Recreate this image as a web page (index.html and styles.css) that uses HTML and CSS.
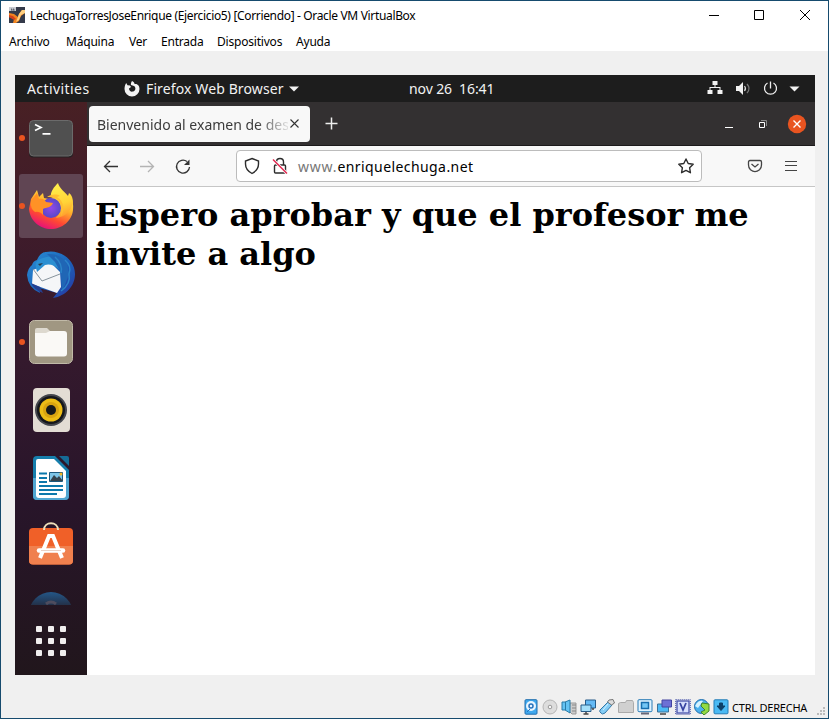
FILE: index.html
```html
<!DOCTYPE html>
<html lang="es">
<head>
<meta charset="utf-8">
<title>LechugaTorresJoseEnrique (Ejercicio5) [Corriendo] - Oracle VM VirtualBox</title>
<link rel="stylesheet" href="styles.css">
</head>
<body>
<div class="window">
  <header class="titlebar">
    <svg class="app-icon" width="16" height="16" viewBox="0 0 16 16"><rect width="16" height="16" fill="#343a4a"/><path d="M0 6l5 1 4 3 1-3 3-4h3v3l-4 3-2 5-3 2H4l1-4-5-2z" fill="#f28420"/><path d="M10 7l3-4h3v3l-4 2-2 5-3 2z" fill="#ffd080"/><path d="M0 8l4 1 3 3-2 1-5-3z" fill="#d4401c"/><path d="M0 0h7v4H0z" fill="#c8cbd2"/><path d="M2 2h1v2M4 2h1v2" stroke="#707682"/></svg>
    <span class="title">LechugaTorresJoseEnrique (Ejercicio5) [Corriendo] - Oracle VM VirtualBox</span>
    <svg class="win-controls" width="104" height="12" viewBox="0 0 104 12" fill="none" stroke="#000"><path d="M1 6.500h10M46.500 1.500h9v9h-9zM92 1l10 10M102 1L92 11"/></svg>
  </header>
  <nav class="menubar"><span class="m1">Archivo</span><span class="m2">Máquina</span><span class="m3">Ver</span><span class="m4">Entrada</span><span class="m5">Dispositivos</span><span class="m6">Ayuda</span></nav>
  <main class="stage">
    <div class="desktop">
      <div class="topbar">
        <span class="activities">Activities</span>
        <svg class="fox-mono" width="16" height="16" viewBox="0 0 16 16"><path d="M8 0C10 1 10.500 2 10.500 3C14 2.500 15.500 5 15.500 8A7.500 7.500 0 0 1 .500 8C.500 5 1.500 3 2.200 2L3.500 4.200 6 4.500 7 6 5 7.500C5 10 7 11 9 10.500 12 10 12 6 10 5L7 4C6.500 2.500 7.500 1 8 0z" fill="#f2f2f2"/></svg>
        <span class="appname">Firefox Web Browser</span>
        <svg class="caret" width="10" height="6" viewBox="0 0 10 6"><path d="M0 .5h10L5 5.500z" fill="#f2f2f2"/></svg>
        <span class="clock">nov 26&nbsp; 16:41</span>
        <svg class="tray" width="94" height="16" viewBox="0 0 94 16" fill="#f2f2f2"><path d="M5.500 0h5v4h-2v2h5v3h2v4h-5V9h2V7h-9v2h2v4H.500V9h2V6h5V4h-2z"/><path d="M29 5h3l4-4v13l-4-4h-3z"/><path d="M37.500 5q2 2.500 0 5" fill="none" stroke="#ddd" stroke-width="1.200"/><path d="M40 3q4 4.500 0 9" fill="none" stroke="#777" stroke-width="1.300"/><path d="M60.500 2a6 6 0 1 0 6 0M63.500 .5v7" fill="none" stroke="#eee" stroke-width="1.300"/><path d="M82.500 5.500h10l-5 5z"/></svg>
      </div>
      <div class="workspace">
        <aside class="dock">
          <div class="dock-list">
            <div class="item running"><svg width="48" height="48" viewBox="0 0 48 48"><rect x="2" y="7.500" width="44" height="36" rx="4" fill="#242123"/><rect x="2.500" y="6.500" width="43" height="35.500" rx="4" fill="#505050" stroke="#6b6b6b"/><path d="M8 10.500l6 3-6 3M15.500 19.800h8" fill="none" stroke="#fff" stroke-width="1.700"/></svg></div>
            <div class="item running active"><svg width="48" height="48" viewBox="0 0 48 48"><defs><linearGradient id="ff" x1=".8" y1=".1" x2=".35" y2="1"><stop offset="0" stop-color="#fff44f"/><stop offset=".35" stop-color="#ffb52c"/><stop offset=".7" stop-color="#ff4932"/><stop offset="1" stop-color="#e5107b"/></linearGradient><linearGradient id="flame" x1=".3" y1="0" x2=".5" y2="1"><stop offset="0" stop-color="#fff04c"/><stop offset=".6" stop-color="#ffd338"/><stop offset="1" stop-color="#ff9a2d"/></linearGradient><radialGradient id="globe"><stop offset="0" stop-color="#9349e8"/><stop offset="1" stop-color="#5848c8"/></radialGradient></defs><path d="M4 17l6-9 2 7 4-4 1 5 5 1 10-4 9 1 3 2c2 3 2.500 7 2 12C45 39 35 47 24 47S3 39 2 27z" fill="url(#ff)"/><path d="M31 1c-4 4-8 9-7 14l6 2c4 5 5 12-1 19 10-1 15-8 17-15 0-4-1-8-4-10l-1 3C38 10 32 6 31 1z" fill="url(#flame)"/><circle cx="24" cy="26" r="10" fill="url(#globe)"/><path d="M4 19l6-8 2 6c4-1 6 1 7 3l7 1c-2 5-6 4-10 6v6q-3-4-8-3-5-3-4-11z" fill="#ff9226"/><path d="M20 15c5-3 10-3 13-1l-3 1c7 4 8 13 4 19q2-8-2-15c-3-3-6-4-12-4z" fill="#ffbe32"/></svg></div>
            <div class="item"><svg width="48" height="48" viewBox="0 0 48 48"><defs><linearGradient id="tb" x1="0" y1="0" x2="1" y2="1"><stop offset="0" stop-color="#2a8fd6"/><stop offset=".5" stop-color="#1c67bd"/><stop offset="1" stop-color="#2734a0"/></linearGradient></defs><path d="M10 10C13 3 17 2 19 2 32-1 48 9 48 24 48 36 39 46 26 48l4-5-18-5 1 5Q1 38 0 25q1-7 5-10 1-4 5-5z" fill="url(#tb)"/><path d="M6 20l5-2q7-5 13-5l9 9 1 15-4 6-25-9z" fill="#f5f6f8"/><path d="M6 19l9 12 18-7" fill="none" stroke="#87939c"/><path d="M9 18q-2-6 4-9 7-3 16-3l4 14q-8-7-15-5l-8 7z" fill="#2b8fd2"/><path d="M20 4q14-1 20 10l2 10-4 11-3 6q-1-10-1-18l-6-11z" fill="#2066b5"/><path d="M38 10q7 6 4 14 2 10-8 17M28 7q8 7 6 16" fill="none" stroke="#2b84c8" stroke-width="1.500"/><path d="M11 14l5-1-3 3z" fill="#263b50"/><path d="M4 33l9 4 3 6Q7 40 4 33z" fill="#243f91"/></svg></div>
            <div class="item running"><svg width="48" height="48" viewBox="0 0 48 48"><rect x="2.500" y="2.500" width="43" height="43" rx="5" fill="#a09782" stroke="#c1baa8"/><path d="M8 12q0-2 2-2h10l4 4v8H8z" fill="#ddd9cf"/><path d="M8 15h11l4-2h14q3 0 3 3V35.500q0 3-3 3H11q-3 0-3-3z" fill="#faf9f6"/></svg></div>
            <div class="item"><svg width="48" height="48" viewBox="0 0 48 48"><rect x="6" y="2" width="37" height="44" rx="4" fill="#e3ddd4"/><circle cx="24" cy="24" r="16" fill="#44464c"/><circle cx="24" cy="24" r="14" fill="#15171b"/><circle cx="24" cy="24" r="11.500" fill="#edbd16"/><circle cx="24" cy="24" r="8" fill="#d9a411"/><circle cx="24" cy="24" r="5" fill="#15191b"/></svg></div>
            <div class="item"><svg width="48" height="48" viewBox="0 0 48 48"><path d="M10 2h18l14 14V42q0 4-4 4H10q-4 0-4-4V6q0-4 4-4z" fill="#167eac"/><path d="M6 24h36v18q0 4-4 4H10q-4 0-4-4z" fill="#50a6d1"/><path d="M11 5h16l12 12v24q0 3-3 3H12q-3 0-3-3V7q0-2 2-2z" fill="#fff"/><path d="M32 2h8q2 0 2 2v8z" fill="#156b96"/><path d="M12 19.500h8M12 24h8M12 28h8M12 32h24M12 36h24M12 40h18" stroke="#0c78ab" stroke-width="1.800"/><path d="M22.500 18.500h13v9h-13z" fill="#7dc5e7" stroke="#1c587c"/><path d="M23 27l4-6 3 3 2-2 4 5z" fill="#34434c"/><circle cx="34" cy="20" r="1.500" fill="#f3b622"/></svg></div>
            <div class="item"><svg width="48" height="48" viewBox="0 0 48 48"><rect x="2" y="6" width="44" height="36.500" rx="4" fill="#f06028"/><path d="M2 24h44v14.500q0 4-4 4H6q-4 0-4-4z" fill="#f0804e"/><path d="M17 8c0-9 14-9 14 0" fill="none" stroke="#eee0bb" stroke-width="2"/><path d="M13 36l9-22h4l9 22" fill="none" stroke="#fff" stroke-width="4"/><path d="M12 28.500h24" stroke="#fff" stroke-width="4.500" stroke-linecap="round"/><path d="M14 28.500h20" stroke="#ead1c5"/></svg></div>
            <div class="item help"><svg width="48" height="48" viewBox="0 0 48 48"><defs><linearGradient id="hp" x1="0" y1="0" x2="0" y2="1"><stop offset="0" stop-color="#245788"/><stop offset=".3" stop-color="#233048"/></linearGradient></defs><circle cx="24" cy="24" r="22" fill="url(#hp)"/><path d="M19 14q5-4 10 0" fill="none" stroke="#4e4c5e" stroke-width="3"/></svg></div>
          </div>
          <div class="app-grid"><i></i><i></i><i></i><i></i><i></i><i></i><i></i><i></i><i></i></div>
        </aside>
        <section class="browser">
          <div class="tabs">
            <div class="tab"><span class="tab-label">Bienvenido al examen de des</span><svg width="9" height="9" viewBox="0 0 9 9"><path d="M.5.5l8 8M8.500.5l-8 8" stroke="#333" stroke-width="1.100"/></svg></div>
            <svg class="plus" width="13" height="13" viewBox="0 0 13 13"><path d="M.5 6.500h12M6.500.5v12" stroke="#eee" stroke-width="1.500"/></svg>
            <svg class="browser-controls" width="84" height="20" viewBox="0 0 84 20" fill="none" stroke="#fff"><path d="M1 13.500h8"/><path d="M35.500 8.500h5v5h-5z"/><path d="M37 6.500h5.500V12" stroke="#888"/><circle cx="73" cy="10" r="9.200" fill="#e95420" stroke="none"/><path d="M69.500 6.500l7 7M76.500 6.500l-7 7" stroke-width="1.400"/></svg>
          </div>
          <div class="toolbar">
            <svg class="nav-icons" width="90" height="18" viewBox="0 0 90 18" fill="none" stroke="#333" stroke-width="1.300"><path d="M7 4L1.500 9.500 7 15M2 9.500h13"/><path d="M45 4L50.500 9.500 45 15M50 9.500H37" stroke="#b4b4b4"/><path d="M84 4.500a6.500 6.500 0 1 0 2.500 5.500"/><path d="M86.500 2.500V8H81z" fill="#333" stroke="none"/></svg>
            <div class="url">
              <svg width="44" height="18" viewBox="0 0 44 18" fill="none" stroke="#2c2c2c" stroke-width="1.400"><path d="M8 1.500L14.500 4V7q0 6-6.500 9.500Q1.500 13 1.500 7V4z"/><path d="M31.500 8h9q1 0 1 1v6q0 1-1 1h-9q-1 0-1-1V9q0-1 1-1zM32.500 8V5q0-3.500 3.500-3.500T39.500 5v3"/><path d="M29 2.500l14 14" stroke="#fff" stroke-width="3"/><path d="M29 2.500l14 14" stroke="#e22850" stroke-width="1.500"/></svg>
              <span class="address">www.<b>enriquelechuga.net</b></span>
              <svg class="star" width="16" height="16" viewBox="0 0 16 16"><path d="M8 1l2.200 4.500 5 .7-3.600 3.500.8 5L8 12.400l-4.400 2.300.8-5L.8 6.200l5-.7z" fill="none" stroke="#2c2c2c" stroke-width="1.400" stroke-linejoin="round"/></svg>
            </div>
            <svg class="tools" width="52" height="16" viewBox="0 0 52 16" fill="none" stroke="#444" stroke-width="1.300"><path d="M3 2.500h10q1.500 0 1.500 1.500v3q0 3-2 4.800Q8 15.500 3.500 11.800 1.500 10 1.500 7V4q0-1.500 1.500-1.500z"/><path d="M4.500 6L8 9l3.500-3"/><path d="M38 3.500h12M38 7.500h12M38 12.500h12" stroke-width="1"/></svg>
          </div>
          <article class="page"><h1>Espero aprobar y que el profesor me invite a algo</h1></article>
        </section>
      </div>
    </div>
  </main>
  <footer class="statusbar">
    <svg width="16" height="16" viewBox="0 0 16 16"><rect x="2" y=".7" width="12" height="14.500" rx="1" fill="#3fa9ef" stroke="#226fae"/><circle cx="8" cy="7" r="5" fill="#e8f5ff"/><circle cx="8" cy="7" r="2" fill="none" stroke="#2673bd" stroke-width="1.500"/><path d="M7 10l-3 3" stroke="#2673bd"/></svg>
    <svg width="16" height="16" viewBox="0 0 16 16"><circle cx="8" cy="8" r="7" fill="#ddd" stroke="#b5b5b5"/><circle cx="8" cy="8" r="1.800" fill="#f8f8f8" stroke="#999"/></svg>
    <svg width="16" height="16" viewBox="0 0 16 16"><path d="M9 4h6v11h-4l-3-3z" fill="#ccc" stroke="#999"/><path d="M11 6h4M11 9h4M11 12h4" stroke="#888"/><path d="M1 3h3l5-2v13l-5-3H1z" fill="#64c3f3" stroke="#287ba8"/><path d="M4.500 3v8" stroke="#287ba8"/></svg>
    <svg width="16" height="16" viewBox="0 0 16 16"><path d="M5.500 1h10v8h-10z" fill="#64b9f4" stroke="#275b88"/><path d="M1 6h10v6.500H1z" fill="#a4def9" stroke="#275b88"/><path d="M3.500 15h5M6 13v2M13 9v2" stroke="#444" stroke-width="1.500"/></svg>
    <svg width="16" height="16" viewBox="0 0 16 16"><path d="M1 11l8-8 4 3-7 8q-3 2-4 0-2-1-1-3z" fill="#83cdf6" stroke="#3478a7"/><path d="M10 1l4-.5 1.500 3.500-3 2-4-3z" fill="#ddd" stroke="#777"/><path d="M4 11l5-6" stroke="#d4f2ff"/></svg>
    <svg width="16" height="16" viewBox="0 0 16 16"><path d="M.5 13.500v-9l2-1h5l1-2h6l1 2v10z" fill="#d0d0d0" stroke="#aaa"/></svg>
    <svg width="16" height="16" viewBox="0 0 16 16"><rect x="1" y=".7" width="14" height="12" rx="1" fill="#dff3ff" stroke="#287bb5"/><rect x="4.500" y="3.500" width="7" height="6" fill="#73c6f5" stroke="#176eae" stroke-width="1.500"/><path d="M4 14.500h8" stroke="#667" stroke-width="2"/></svg>
    <svg width="16" height="16" viewBox="0 0 16 16"><path d="M1.500 5h11v8h-11z" fill="#4dbaf4" stroke="#3b7298"/><path d="M6 1h9.500v7H6z" fill="#6d70d5" stroke="#4444a1"/><path d="M4 15h6" stroke="#444" stroke-width="1.500"/></svg>
    <svg width="16" height="16" viewBox="0 0 16 16"><rect x="2" y="2" width="12" height="12" fill="#d6dffc" stroke="#4854ac" stroke-width="1.300"/><rect x=".7" y=".7" width="14.600" height="14.600" fill="none" stroke="#3744a2" stroke-dasharray="1 1"/><path d="M5 4l3 7 3-7" fill="none" stroke="#3744a2" stroke-width="1.800"/></svg>
    <svg width="16" height="16" viewBox="0 0 16 16"><circle cx="7.500" cy="7.500" r="7" fill="#4ab1ee" stroke="#226fae"/><path d="M1 7q3-6 8-5L4 9z" fill="#d4f2ff"/><path d="M8 4l7 1v7l-5 4-3-3 4-2-4-4z" fill="#91db44" stroke="#43842c"/></svg>
    <svg width="16" height="16" viewBox="0 0 16 16"><rect x="1" y=".8" width="14" height="14" rx="1" fill="#4abaf4" stroke="#237bb5"/><path d="M6.500 4h3v3H12l-4 4.500L4 7h2.500z" fill="#0d4068" stroke="#0d4068"/></svg>
    <span class="hostkey">CTRL DERECHA</span>
    <svg class="grip" width="9" height="9" viewBox="0 0 9 9" fill="#bbb"><path d="M6 0h2v2H6zM3 3h2v2H3zM6 3h2v2H6zM0 6h2v2H0zM3 6h2v2H3zM6 6h2v2H6z"/></svg>
  </footer>
</div>
</body>
</html>
```
FILE: styles.css
```css
* { box-sizing: border-box; }
body { margin: 0; overflow: hidden; }
svg { display: block; flex: none; }
.window { width: 829px; height: 719px; border: 1px solid #164b6e; background: #f0f0f0; display: flex; flex-direction: column; font-family: "Noto Sans", sans-serif; white-space: nowrap; }
.titlebar { height: 30px; flex: none; display: flex; align-items: center; background: #fff; padding: 0 16px 2px 8px; color: #000; font-size: 12px; }
.title { margin-left: 5px; letter-spacing: -0.34px; padding-top: 1px; }
.win-controls { margin-left: auto; }
.menubar { height: 20px; flex: none; display: flex; background: #fff; padding-left: 8px; font-size: 12px; line-height: 22px; letter-spacing: -0.2px; }
.menubar span { flex: none; }
.m1 { width: 57px; } .m2 { width: 63px; } .m3 { width: 32px; } .m4 { width: 56px; } .m5 { width: 79px; }
.stage { flex: 1; padding: 24px 0 0 14px; }
.desktop { width: 800px; height: 600px; background: #fff; font-size: 14px; }
.topbar { height: 27px; background: #1d1d1d; color: #f2f2f2; display: flex; align-items: center; padding-left: 12px; }
.activities { width: 97px; letter-spacing: 0.42px; }
.appname { width: 138px; margin-left: 6px; letter-spacing: 0.12px; }
.caret { margin-left: 5px; }
.clock { margin-left: 110px; width: 86px; letter-spacing: -0.1px; padding-bottom: 1px; }
.tray { margin-left: auto; margin-right: 14px; }
.workspace { height: 573px; display: flex; }
.dock { width: 72px; background: linear-gradient(#482024 0, #401c2a 20%, #34192d 45%, #28152a 70%, #21161c 100%); }
.dock-list { height: 503px; overflow: hidden; padding: 4px; display: flex; flex-direction: column; gap: 4px; }
.item { height: 64px; flex: none; display: flex; align-items: center; justify-content: center; position: relative; border-radius: 3px; }
.active { background: #604553; }
.running::before { content: ""; position: absolute; left: 0; top: 29px; width: 6px; height: 6px; border-radius: 50%; background: #e95420; }
.app-grid { display: grid; grid-template-columns: repeat(3, 6px); gap: 6px; width: 30px; margin: 21px auto 0; }
.app-grid i { width: 6px; height: 6px; border-radius: 1px; background: #f0eeee; }
.browser { width: 728px; display: flex; flex-direction: column; }
.tabs { height: 44px; background: #333031; border-bottom: 1px solid #1c1a1b; display: flex; align-items: center; padding: 0 7px 0 2px; }
.tab { height: 36px; width: 221px; border-radius: 4px; background: #f8f8f8; display: flex; align-items: center; justify-content: space-between; padding: 0 11px 0 8px; color: #3c3c3c; }
.tab-label { width: 191px; overflow: hidden; padding-top: 2px; mask-image: linear-gradient(90deg, #000 160px, transparent 195px); }
.plus { margin-left: 15px; }
.browser-controls { margin-left: auto; }
.toolbar { height: 41px; background: #f8f8f8; border-bottom: 1px solid #c6c6c6; display: flex; align-items: center; padding-left: 16px; }
.url { margin-left: 43px; width: 466px; height: 32px; border: 1px solid #bcbcbc; border-radius: 4px; background: #fff; display: flex; align-items: center; padding: 0 7px; color: #777; }
.address { margin-left: 10px; letter-spacing: 0.8px; }
.address b { font-weight: 400; color: #000; letter-spacing: 0.42px; }
.star { margin-left: auto; }
.tools { margin-left: 45px; }
.page { padding: 9px 8px 8px; }
h1 { margin: 0; font: bold 32px/39px "DejaVu Serif", serif; white-space: normal; color: #000; }
.statusbar { height: 23px; flex: none; display: flex; align-items: center; gap: 3px; padding: 1px 2px 0 522px; font-size: 11px; }
.hostkey { width: 76px; letter-spacing: -0.22px; }
.grip { margin-left: auto; align-self: flex-end; margin-bottom: 2px; }
```
